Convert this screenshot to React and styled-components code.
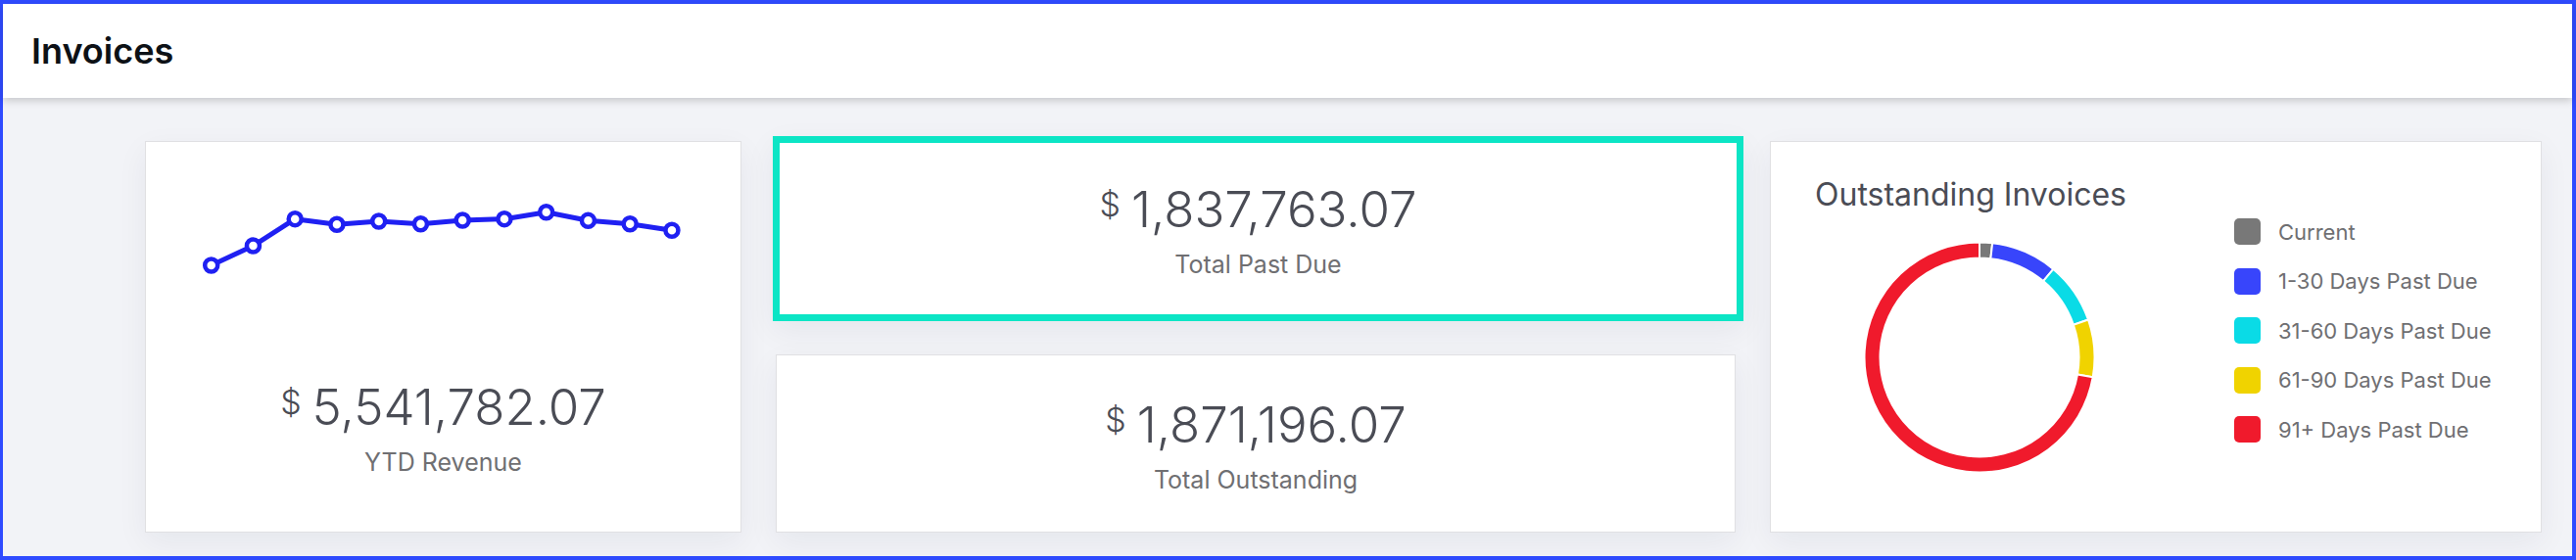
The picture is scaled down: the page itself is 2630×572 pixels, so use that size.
import React from 'react';
import styled, { createGlobalStyle } from 'styled-components';

const GlobalStyle = createGlobalStyle`
    html, body {
        margin: 0;
        height: 100%;
    }
    body {
        font-family: Inter, "Noto Sans", "Liberation Sans", sans-serif;
    }
`;

const Frame = styled.div`
    height: 100vh;
    box-sizing: border-box;
    border: 4px solid #2f4bff;
    border-left-width: 3px;
    background: #f2f3f7;
    display: flex;
    flex-direction: column;
`;

const Header = styled.header`
    height: 96px;
    flex-shrink: 0;
    background: #fff;
    display: flex;
    align-items: center;
    padding: 0 29px;
    box-shadow: 0 3px 8px rgba(0, 0, 0, 0.18);
    position: relative;
    z-index: 1;
`;

const PageTitle = styled.h1`
    margin: 0;
    font-size: 36px;
    font-weight: 600;
    color: #0d1116;
`;

const Dashboard = styled.main`
    flex: 1;
    display: grid;
    grid-template-columns: 609px 980px 788px;
    column-gap: 35px;
    padding: 44px 31px 24px 145px;
`;

const Card = styled.section`
    background: #fff;
    border: 1px solid #e0e0e3;
    box-sizing: border-box;
    box-shadow: 0 10px 30px rgba(20, 30, 60, 0.06);
`;

const RevenueCard = styled(Card)`
    display: flex;
    flex-direction: column;
    align-items: center;
`;

const Sparkline = styled.svg`
    display: block;
    width: 100%;
    height: 160px;
    flex-shrink: 0;
`;

const MiddleColumn = styled.div`
    display: grid;
    grid-template-rows: 1fr 1fr;
    row-gap: 36px;
`;

const StatCard = styled(Card)`
    display: flex;
    flex-direction: column;
    align-items: center;
    justify-content: center;
    padding-top: 4px;
    ${(p) => p.$highlight && `
        border: 7px solid #0ce5c5;
        margin: -5px -8px -2px -3px;
    `}
`;

const StatBlock = styled.div`
    display: flex;
    flex-direction: column;
    align-items: center;
    margin-top: ${(p) => p.$offset || 0}px;
`;

const StatValue = styled.div`
    display: flex;
    align-items: flex-start;
    color: #4a4c55;
`;

const Currency = styled.span`
    font-size: 34px;
    line-height: 34px;
    font-weight: 300;
    margin: 6px 11px 0 0;
`;

const Amount = styled.span`
    font-size: 51px;
    line-height: 56px;
    font-weight: 300;
`;

const StatLabel = styled.div`
    margin-top: 13px;
    font-size: 25px;
    line-height: 30px;
    color: #6f6f72;
`;

const ChartCard = styled(Card)`
    padding: 36px 45px;
`;

const ChartTitle = styled.h2`
    margin: 0;
    font-size: 32px;
    line-height: 36px;
    font-weight: 400;
    color: #4a4c55;
`;

const ChartRow = styled.div`
    display: flex;
    align-items: flex-start;
`;

const Donut = styled.svg`
    display: block;
    flex-shrink: 0;
    margin: 28px 0 0 48px;
`;

const Legend = styled.ul`
    list-style: none;
    margin: 6px 0 0 140px;
    padding: 0;
    display: flex;
    flex-direction: column;
    gap: 23.5px;
`;

const LegendItem = styled.li`
    display: flex;
    align-items: center;
    gap: 18px;
    height: 27px;
    font-size: 22px;
    color: #6f6f72;
    white-space: nowrap;
`;

const Swatch = styled.span`
    width: 27px;
    height: 27px;
    border-radius: 5px;
    background: ${(p) => p.$color};
    flex-shrink: 0;
`;

// monthly revenue, thousands
const revenue = [340, 380, 435, 423.7, 430.3, 424.9, 432.3, 435, 449, 431.7, 424.9, 411.7];

const aging = [
    { label: 'Current', value: 33433, color: '#787878' },
    { label: '1-30 Days Past Due', value: 174000, color: '#3845fb' },
    { label: '31-60 Days Past Due', value: 161000, color: '#0adbe6' },
    { label: '61-90 Days Past Due', value: 151000, color: '#f0d300' },
    { label: '91+ Days Past Due', value: 1351763.07, color: '#f01a2c' },
];

const RevenueSparkline = () => {
    const max = Math.max(...revenue);
    const pts = revenue.map((v, i) => [66.7 + i * 42.75, 71.7 + (max - v) * 0.498]);
    return (
        <Sparkline viewBox="0 0 607 160" preserveAspectRatio="none">
            <polyline
                points={pts.map((p) => p.join(',')).join(' ')}
                fill="none"
                stroke="#1f20f2"
                strokeWidth="5"
                strokeLinejoin="round"
            />
            {pts.map(([x, y], i) => (
                <circle key={i} cx={x} cy={y} r="6.5" fill="#fff" stroke="#1f20f2" strokeWidth="4.5" />
            ))}
        </Sparkline>
    );
};

const polar = (cx, cy, r, deg) => {
    const a = (deg * Math.PI) / 180;
    return [cx + r * Math.sin(a), cy - r * Math.cos(a)];
};

const AgingDonut = () => {
    const total = aging.reduce((s, d) => s + d.value, 0);
    const cx = 120;
    const cy = 120;
    const ro = 117.5;
    const ri = 101.5;
    let start = 0;
    return (
        <Donut width="240" height="240" viewBox="0 0 240 240">
            {aging.map((d) => {
                const sweep = (d.value / total) * 360;
                const end = start + sweep;
                const large = sweep > 180 ? 1 : 0;
                const [x0, y0] = polar(cx, cy, ro, start);
                const [x1, y1] = polar(cx, cy, ro, end);
                const [x2, y2] = polar(cx, cy, ri, end);
                const [x3, y3] = polar(cx, cy, ri, start);
                const path = `M${x0} ${y0} A${ro} ${ro} 0 ${large} 1 ${x1} ${y1} L${x2} ${y2} A${ri} ${ri} 0 ${large} 0 ${x3} ${y3} Z`;
                start = end;
                return <path key={d.label} d={path} fill={d.color} stroke="#fff" strokeWidth="2" />;
            })}
        </Donut>
    );
};

const Stat = ({ amount, label, offset }) => (
    <StatBlock $offset={offset}>
        <StatValue>
            <Currency>$</Currency>
            <Amount>{amount}</Amount>
        </StatValue>
        <StatLabel>{label}</StatLabel>
    </StatBlock>
);

const App = () => {
    return (
        <>
            <GlobalStyle />
            <Frame>
                <Header>
                    <PageTitle>Invoices</PageTitle>
                </Header>
                <Dashboard>
                    <RevenueCard>
                        <RevenueSparkline />
                        <Stat amount="5,541,782.07" label="YTD Revenue" offset={83} />
                    </RevenueCard>
                    <MiddleColumn>
                        <StatCard $highlight>
                            <Stat amount="1,837,763.07" label="Total Past Due" />
                        </StatCard>
                        <StatCard>
                            <Stat amount="1,871,196.07" label="Total Outstanding" />
                        </StatCard>
                    </MiddleColumn>
                    <ChartCard>
                        <ChartTitle>Outstanding Invoices</ChartTitle>
                        <ChartRow>
                            <AgingDonut />
                            <Legend>
                                {aging.map((d) => (
                                    <LegendItem key={d.label}>
                                        <Swatch $color={d.color} />
                                        {d.label}
                                    </LegendItem>
                                ))}
                            </Legend>
                        </ChartRow>
                    </ChartCard>
                </Dashboard>
            </Frame>
        </>
    );
};

export default App;
